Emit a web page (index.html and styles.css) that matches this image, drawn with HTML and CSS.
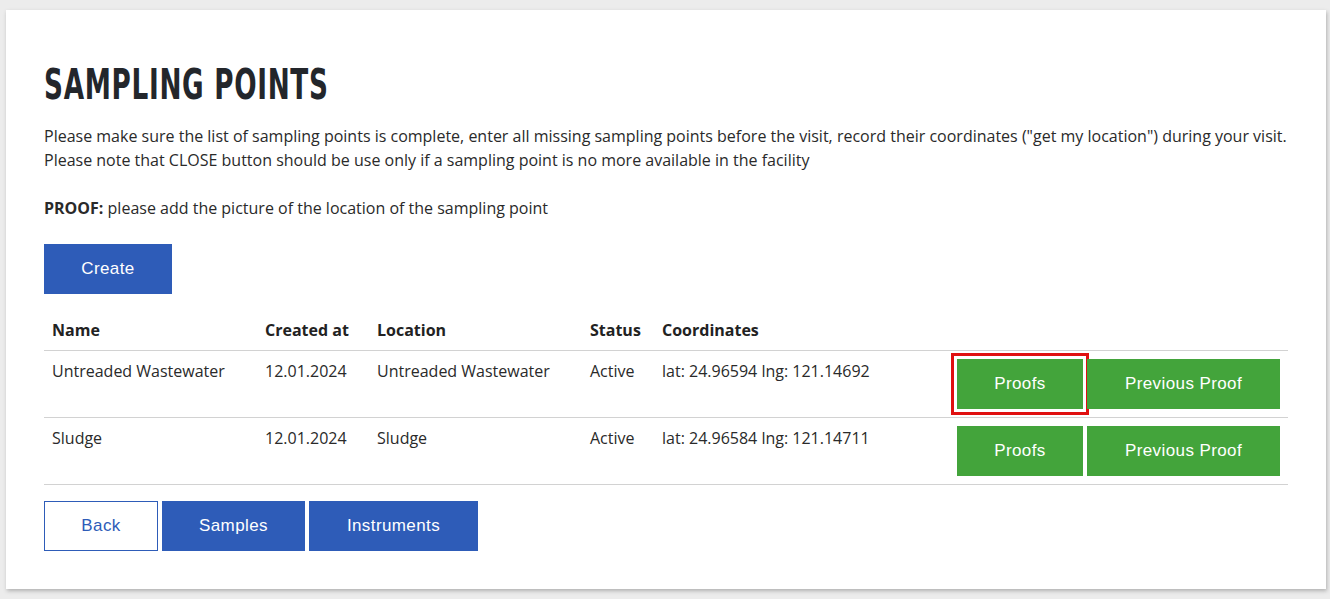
FILE: index.html
```html
<!DOCTYPE html>
<html>
<head>
<meta charset="utf-8">
<link rel="stylesheet" href="styles.css">
</head>
<body>
<div class="card">
  <h1 class="title"><span class="title-text">SAMPLING POINTS</span></h1>
  <p class="intro">Please make sure the list of sampling points is complete, enter all missing sampling points before the visit, record their coordinates ("get my location") during your visit.<br>Please note that CLOSE button should be use only if a sampling point is no more available in the facility</p>
  <p class="proof"><strong>PROOF:</strong> please add the picture of the location of the sampling point</p>
  <div class="create-row"><button class="btn btn-blue btn-create">Create</button></div>
  <table class="points">
    <colgroup>
      <col class="c-name"><col class="c-created"><col class="c-loc"><col class="c-status"><col class="c-coord"><col>
    </colgroup>
    <thead>
      <tr><th>Name</th><th>Created at</th><th>Location</th><th>Status</th><th>Coordinates</th><th></th></tr>
    </thead>
    <tbody>
      <tr>
        <td>Untreaded Wastewater</td><td>12.01.2024</td><td>Untreaded Wastewater</td><td>Active</td><td>lat: 24.96594 lng: 121.14692</td>
        <td class="actions"><button class="btn btn-green btn-proofs highlight">Proofs</button><button class="btn btn-green btn-prev">Previous Proof</button></td>
      </tr>
      <tr>
        <td>Sludge</td><td>12.01.2024</td><td>Sludge</td><td>Active</td><td>lat: 24.96584 lng: 121.14711</td>
        <td class="actions"><button class="btn btn-green btn-proofs">Proofs</button><button class="btn btn-green btn-prev">Previous Proof</button></td>
      </tr>
    </tbody>
  </table>
  <div class="footer-btns">
    <button class="btn btn-outline btn-back">Back</button>
    <button class="btn btn-blue btn-samples">Samples</button>
    <button class="btn btn-blue btn-instr">Instruments</button>
  </div>
</div>
</body>
</html>
```
FILE: styles.css
```css
html, body { margin: 0; padding: 0; }
body {
  background: #ececec;
  padding: 10px 4px 10px 6px;
  font-family: "Open Sans", "Noto Sans", sans-serif;
  color: #222;
}
.card {
  background: #fff;
  box-shadow: 1px 2px 4px rgba(0,0,0,0.25);
  height: 579px;
  box-sizing: border-box;
  padding: 52px 38px 0 38px;
}
.title {
  margin: 0;
  height: 44px;
  font-family: "DejaVu Sans Condensed", "Liberation Sans", sans-serif;
  font-weight: 700;
  font-size: 43px;
  line-height: 44px;
  color: #23262b;
  white-space: nowrap;
}
.title-text {
  display: inline-block;
  transform-origin: left center;
  transform: scaleX(0.68);
  letter-spacing: 1px;
}
.intro {
  margin: 18px 0 0;
  font-size: 16px;
  line-height: 24px;
  color: #2a2a2a;
}
.proof {
  margin: 24px 0 0;
  font-size: 16px;
  line-height: 24px;
  color: #2a2a2a;
}
.create-row { margin-top: 24px; }
.btn {
  font-family: "Liberation Sans", Arial, sans-serif;
  font-size: 17px;
  letter-spacing: 0.4px;
  height: 50px;
  border: 0;
  border-radius: 0;
  color: #fff;
  padding: 0;
  cursor: pointer;
  vertical-align: top;
}
.btn-blue { background: #2e5cb8; }
.btn-green { background: #43a43b; }
.btn-outline { background: #fff; color: #2e5cb8; border: 1px solid #2e5cb8; }
.btn-create { width: 128px; }
.points {
  margin-top: 24px;
  width: 1244px;
  border-collapse: collapse;
  table-layout: fixed;
  font-size: 16px;
  line-height: 22px;
}
.c-name { width: 213px; }
.c-created { width: 112px; }
.c-loc { width: 213px; }
.c-status { width: 72px; }
.c-coord { width: 300px; }
.points th {
  text-align: left;
  font-weight: 700;
  padding: 0 8px 8px;
  height: 24px;
  border-bottom: 1px solid #d2d2d2;
  color: #222;
}
.points td {
  padding: 9px 8px 0;
  vertical-align: top;
  height: 57px;
  border-bottom: 1px solid #d2d2d2;
  color: #2a2a2a;
}
.points td.actions {
  padding: 8px 8px 0 0;
  text-align: right;
  white-space: nowrap;
}
.btn-proofs { width: 126px; margin-right: 4px; }
.btn-prev { width: 193px; }
.highlight {
  outline: 3px solid #e01010;
  outline-offset: 3px;
}
.footer-btns {
  margin-top: 16px;
  display: flex;
  gap: 4px;
}
.btn-back { width: 114px; }
.btn-samples { width: 143px; }
.btn-instr { width: 169px; }
```
